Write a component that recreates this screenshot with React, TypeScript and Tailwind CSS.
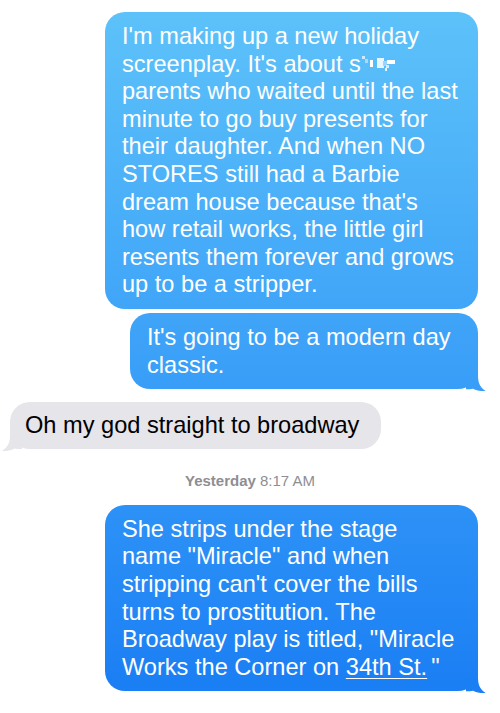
const FONT = { fontFamily: '"Liberation Sans", Arial, sans-serif' }

// tail shares the bubble's fixed gradient, cut out with a clip path
function BlueTail() {
  return (
    <div className="absolute bottom-[-2px] right-[-8px] w-[20px] h-[22px] bg-fixed bg-linear-to-b from-[#5ec3f9] to-[#187cf4] [clip-path:path('M0_0_H12_V6_C12_14_14_18_20_22_C15_22.5_10_21_7_19.5_C5_20_3_20_0_20_Z')]" />
  )
}

function GrayTail() {
  return (
    <svg className="absolute bottom-[-2px] left-[-8px]" width="20" height="22" viewBox="0 0 20 22">
      <path d="M20 0 H8 V6 C8 14 6 18 0 22 C5 22.5 10 21 13 19.5 C15 20 17 20 20 20 Z" fill="#e5e5ea" />
    </svg>
  )
}

// pixelated bit that hides a word in the first message
function Censored() {
  return (
    <svg className="inline-block align-[-2px]" width="36" height="18" viewBox="0 0 36 18">
      <rect x="1" y="0" width="3" height="3" fill="#cfeafd" />
      <rect x="4" y="3" width="3" height="4" fill="#a9dafb" />
      <rect x="9" y="4" width="3" height="7" fill="#ffffff" />
      <rect x="16" y="2" width="7" height="10" fill="#e9f6fe" />
      <rect x="22" y="5" width="4" height="5" fill="#9fd3fa" />
      <rect x="26" y="4" width="8" height="4" fill="#ffffff" />
      <rect x="25" y="9" width="3" height="3" fill="#d8eefd" />
      <rect x="24" y="12" width="2" height="3" fill="#e6f4fe" />
    </svg>
  )
}

function Sent({
  children,
  tail,
  className = '',
}: {
  children: React.ReactNode
  tail?: boolean
  className?: string
}) {
  return (
    <div className="flex justify-end pr-[22px]">
      <div
        className={`relative max-w-[373px] rounded-[20px] bg-fixed bg-linear-to-b from-[#5ec3f9] to-[#187cf4] pl-[17px] pr-[16px] pt-[11px] pb-[10px] text-white ${className}`}
      >
        {children}
        {tail && <BlueTail />}
      </div>
    </div>
  )
}

export default function App() {
  return (
    <div
      className="w-[500px] h-[713px] overflow-hidden bg-white pt-[12px] text-[23.6px] leading-[27.6px]"
      style={FONT}
    >
      <div className="flex flex-col gap-[4px]">
        <Sent>
          I'm making up a new holiday screenplay. It's about s<Censored /> parents who waited
          until the last minute to go buy presents for their daughter. And when NO STORES still
          had a Barbie dream house because that's how retail works, the little girl resents them
          forever and grows up to be a stripper.
        </Sent>
        <Sent tail className="w-[348px]">
          It's going to be a modern day classic.
        </Sent>
      </div>

      <div className="flex pl-[10px] mt-[13px]">
        <div className="relative rounded-[20px] bg-[#e5e5ea] pl-[15px] pr-[22px] pt-[10px] pb-[9px] text-black">
          Oh my god straight to broadway
          <GrayTail />
        </div>
      </div>

      <p className="mt-[23px] mb-[15px] text-center text-[15px] leading-[18px] text-[#8e8e93]">
        <span className="font-bold">Yesterday</span> 8:17 AM
      </p>

      <Sent tail>
        She strips under the stage name "Miracle" and when stripping can't cover the bills turns
        to prostitution. The Broadway play is titled, "Miracle Works the Corner on{' '}
        <span className="underline underline-offset-[3px] decoration-1">34th St.</span>
        <span className="pl-[4px]">"</span>
      </Sent>
    </div>
  )
}
